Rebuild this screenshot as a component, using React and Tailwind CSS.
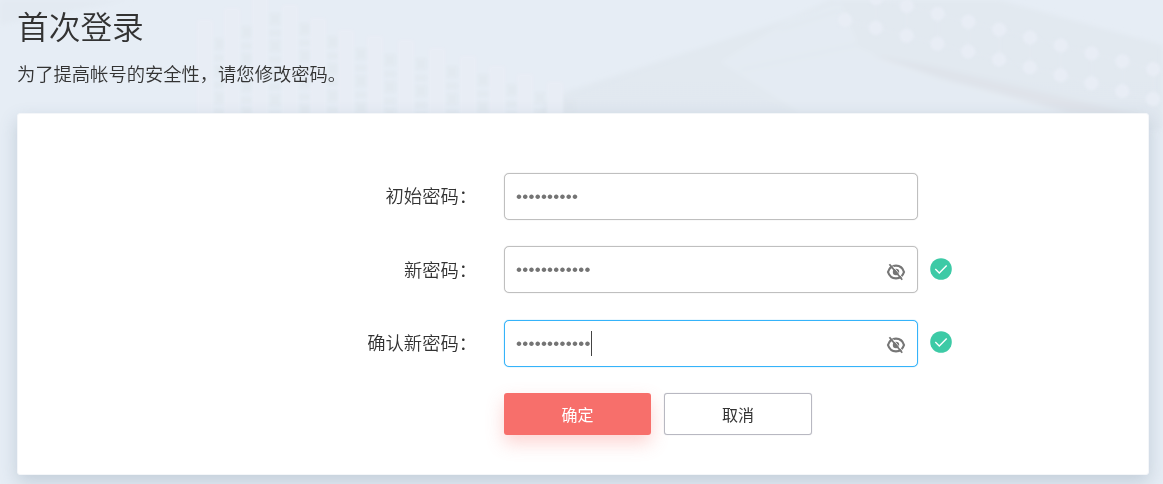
import { clsx } from "clsx";

const FIELDS = [
    { id: "old", label: "初始密码：", length: 10 },
    { id: "new", label: "新密码：", length: 12, toggle: true, valid: true },
    { id: "confirm", label: "确认新密码：", length: 12, toggle: true, valid: true, focused: true },
];

// bars of dots on the left of the backdrop: [x, top]
const COLUMNS = [
    [205, 20], [232, 8], [260, -5], [290, 5], [318, 18], [346, 30], [375, 36],
    [406, 40], [437, 48], [468, 56], [497, 66], [525, 74], [555, 82],
];

function Backdrop() {
    return (
        <svg className="absolute inset-0 w-full h-full" viewBox="0 0 1163 484" aria-hidden="true">
            <defs>
                <linearGradient id="slope" x1="0" y1="0" x2="0" y2="1">
                    <stop offset="0" stopColor="#e2e9f0" />
                    <stop offset="1" stopColor="#e1e8f0" />
                </linearGradient>
                <filter id="soft" x="-10%" y="-10%" width="120%" height="120%">
                    <feGaussianBlur stdDeviation="2.5" />
                </filter>
                <filter id="dots" x="-10%" y="-10%" width="120%" height="120%">
                    <feGaussianBlur stdDeviation="1.8" />
                </filter>
            </defs>
            <g filter="url(#soft)">
                <path d="M550 97L700 48L790 18L830 0H1000L1163 45V130H530Z" fill="url(#slope)" />
                <path d="M720 62L790 20L840 2L860 48L940 80L1090 113H800Z" fill="#e4ebf3" />
                <path d="M740 70L860 44M780 30L840 10" stroke="#e0e8ef" strokeWidth="2" />
                <path d="M870 55L930 66L1150 117L1070 113L950 80Z" fill="#dfe3ea" />
                <path d="M0 130V0H130L0 25Z" fill="#e3eaf2" />
            </g>
            <g filter="url(#dots)">
                {COLUMNS.map(([x, top]) => (
                    <g key={x}>
                        <path d={`M${x} ${top}V120`} stroke="#e8edf5" strokeWidth="16" />
                        <path
                            d={`M${x + 15} ${top + 18}V120`}
                            stroke="#dde5ec"
                            strokeWidth="11"
                            strokeDasharray="12 5 6 4"
                            opacity="0.45"
                        />
                    </g>
                ))}
                {Array.from({ length: 11 }, (_, i) => {
                    const x = 845 + i * 30.8;
                    const y = 20 + i * 7.9;
                    return (
                        <g key={i} fill="#e8edf5" stroke="#e5ebf3">
                            <path d={`M${x} ${y}l31 8M${x + 31} ${y - 22}l31 8M${x + 31} ${y - 22}v30`} />
                            <circle cx={x} cy={y} r="7" />
                            <circle cx={x + 31} cy={y - 22} r="7" />
                        </g>
                    );
                })}
            </g>
        </svg>
    );
}

function EyeOff() {
    return (
        <svg className="w-5 h-5 mt-[4px]" viewBox="0 0 20 20" fill="none" stroke="#767676">
            <path
                d="M2 10C3.2 6.2 6.2 3.7 10 3.7s6.8 2.5 8 6.3c-1.2 3.8-4.2 6.3-8 6.3S3.2 13.8 2 10Z"
                strokeWidth="2.2"
            />
            <circle cx="10" cy="10" r="3.2" fill="#767676" stroke="none" />
            <path d="M6.4 3.6l9.6 11.6" stroke="#fff" strokeWidth="0.8" />
            <path d="M3.4 2.2L16.2 17.8" strokeWidth="1.8" />
        </svg>
    );
}

function ValidMark() {
    return (
        <svg className="w-[22px] h-[22px] ml-3 -mt-[2px]" viewBox="0 0 22 22" fill="none">
            <circle cx="11" cy="11" r="10.8" fill="#3dcaa6" />
            <path d="M5.3 11.1l4 3.8 7.4-7.4" stroke="#fff" strokeWidth="1.4" />
        </svg>
    );
}

function PasswordRow({ label, length, toggle, valid, focused }) {
    return (
        <div className="flex items-center h-12">
            <label className="w-[459px] text-right text-[18.3px] leading-6 -mt-[2px] font-[350]">{label}</label>
            <div
                className={clsx(
                    "ml-[27px] w-[414px] h-[47px] flex items-center rounded-[5px] border bg-white px-[11px]",
                    focused
                        ? "border-[#35b3fa] shadow-[0_0_1px_#42b9f5]"
                        : "border-[#bfbfbf] shadow-[0_0_1px_#c4c4c4]"
                )}
            >
                <span className="font-['Liberation_Sans',sans-serif] text-[17px] tracking-[0.27px] leading-6 pt-px text-[#747474]">
                    {"•".repeat(length)}
                </span>
                {focused && <span className="w-px h-[25px] mt-px bg-[#444]" />}
                <span className="flex-1" />
                {toggle && <EyeOff />}
            </div>
            {valid && <ValidMark />}
        </div>
    );
}

export default function App() {
    return (
        <div className="relative h-[484px] overflow-hidden bg-[#e6edf5] text-[#333] font-['Noto_Sans_CJK_SC',sans-serif]">
            <Backdrop />

            <div className="relative pl-[17px] pr-[14px]">
                <header className="h-[113px] pt-[5px]">
                    <h1 className="text-[31.7px] leading-10 font-[350]">首次登录</h1>
                    <p className="mt-4 text-[18.3px] leading-6 font-[350]">
                        为了提高帐号的安全性，请您修改密码。
                    </p>
                </header>

                <main className="h-[362px] rounded-[3px] border border-[#f4f6f9] bg-white pt-[58px] shadow-[0_7px_18px_rgba(70,95,120,0.22)]">
                    <form className="flex flex-col gap-[25.6px]">
                        {FIELDS.map((field) => (
                            <PasswordRow key={field.id} {...field} />
                        ))}
                        <div className="flex gap-[13px] pl-[486px] text-base">
                            <button
                                type="button"
                                className="w-[147px] h-[42px] rounded-[3px] bg-[#f76f6b] text-white shadow-[0_8px_18px_rgba(247,111,107,0.3)]"
                            >
                                确定
                            </button>
                            <button
                                type="button"
                                className="w-[148px] h-[42px] rounded-[3px] border border-[#b8b8c1] bg-white shadow-[0_0_1px_#c0c0c8]"
                            >
                                取消
                            </button>
                        </div>
                    </form>
                </main>
            </div>
        </div>
    );
}
